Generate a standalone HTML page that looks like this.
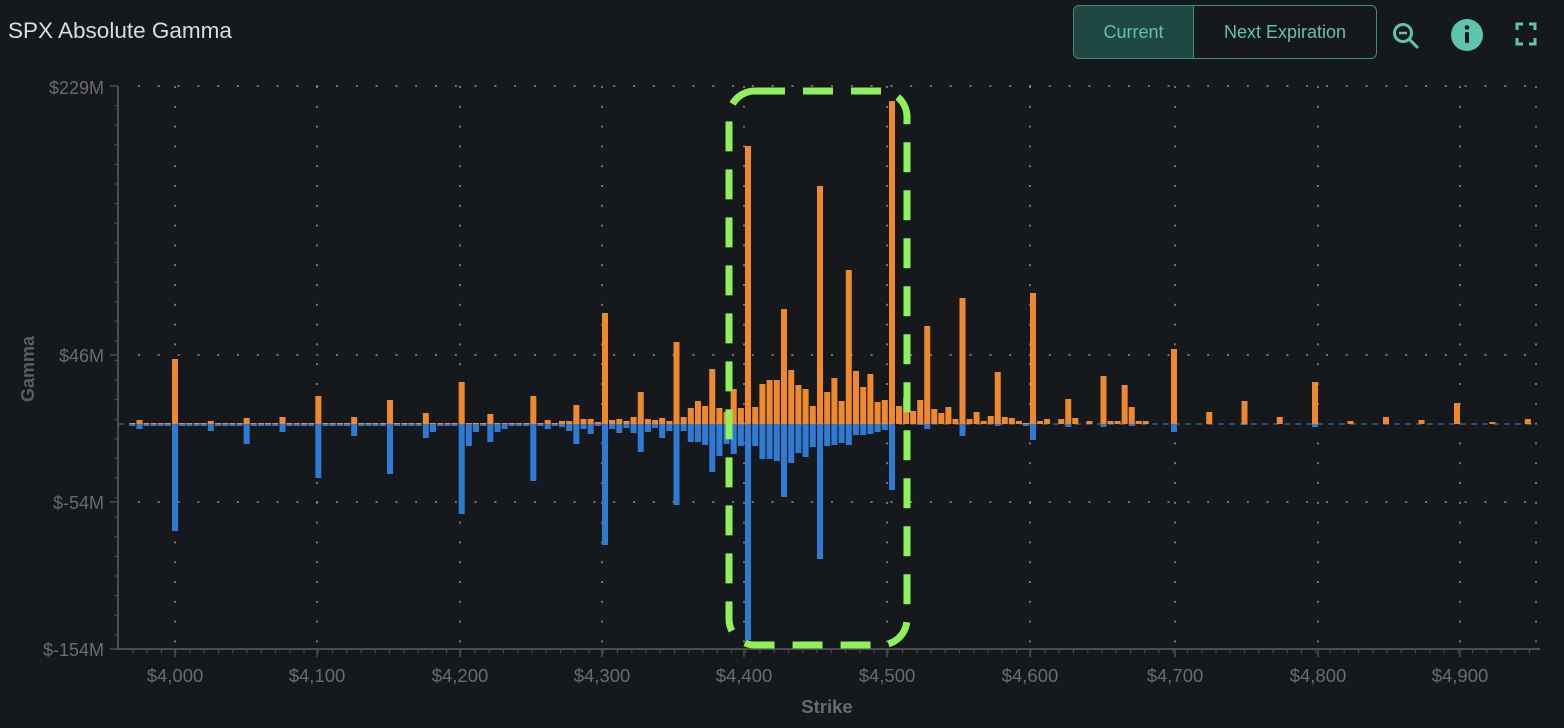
<!DOCTYPE html>
<html><head><meta charset="utf-8"><style>
html,body{margin:0;padding:0;background:#16191c;width:1564px;height:728px;overflow:hidden;font-family:"Liberation Sans",sans-serif}
.t{position:absolute;left:8px;top:18px;font-size:22.5px;color:#dcdcdc}
.bx{position:absolute;left:1073px;top:5px;width:302px;height:52px;border:1.5px solid #3f8f80;border-radius:6px;overflow:hidden;display:flex}
.bx div{height:52px;line-height:52px;color:#64c2ab;font-size:18px;text-align:center}
.c1{width:119px;background:#1f4743;border-right:1.5px solid #3f8f80}
.c2{flex:1}
</style></head><body>
<div class="t">SPX Absolute Gamma</div>
<div class="bx"><div class="c1">Current</div><div class="c2">Next Expiration</div></div>
<svg style="position:absolute;left:0;top:0" width="1564" height="728" id="s">
<g fill="none" stroke="#5ec4ad" stroke-width="3">
<circle cx="1403" cy="33" r="8.5"/><line x1="1409" y1="39" x2="1417" y2="47" stroke-linecap="round"/><line x1="1399" y1="33" x2="1407" y2="33" stroke-width="2.5"/>
<path d="M1517 30v-6h6M1529 24h6v6M1535 38v6h-6M1523 44h-6v-6" stroke-width="3"/>
</g>
<circle cx="1467" cy="35" r="16" fill="#5ec4ad"/>
<circle cx="1467" cy="27.5" r="2.3" fill="#16191c"/><rect x="1465" y="32" width="4" height="11" rx="1.5" fill="#16191c"/>
<g font-family="Liberation Sans,sans-serif" font-size="18" fill="#6b6b6b" text-anchor="end">
<text x="104" y="94">$229M</text><text x="104" y="362">$46M</text><text x="104" y="509">$-54M</text><text x="104" y="656">$-154M</text>
</g>
<text x="34" y="369" transform="rotate(-90 34 369)" font-size="18" font-weight="bold" fill="#5d5d5d" text-anchor="middle" font-family="Liberation Sans,sans-serif">Gamma</text>
<text x="827" y="713" font-size="18.5" font-weight="bold" fill="#6b6b6b" text-anchor="middle" font-family="Liberation Sans,sans-serif">Strike</text>
<g id="g"></g>
<rect x="729" y="91" width="178" height="554" rx="26" fill="none" stroke="#8ef05a" stroke-width="7" stroke-dasharray="30 18"/>
</svg>
<script>
var g=document.getElementById('g'),h='';
var P=[[3950,104],[4000,175],[4300,605],[4400,748],[4500,892],[4600,1033],[4700,1174],[4800,1315],[4900,1457],[4960,1542]];
function X(s){for(var i=0;i<P.length-1;i++){if(s<=P[i+1][0]){var a=P[i],b=P[i+1];return a[1]+(s-a[0])*(b[1]-a[1])/(b[0]-a[0]);}}return 1542;}
var GX=[175,317,460,602,744,887,1030,1175,1318,1460];
var vx=GX.concat([1536]);
vx.forEach(function(x){for(var y=86;y<649;y+=19.8)h+='<rect x="'+(x-0.7)+'" y="'+y+'" width="1.4" height="2" fill="#9a9a9a"/>';});
[86,355,502].forEach(function(y){for(var x=138;x<1536;x+=19.8)h+='<rect x="'+x+'" y="'+(y-0.7)+'" width="2" height="1.4" fill="#9a9a9a"/>';});
h+='<line x1="118" y1="86" x2="118" y2="649" stroke="#4d4d4d" stroke-width="2"/>';
h+='<line x1="118" y1="649" x2="1540" y2="649" stroke="#4d4d4d" stroke-width="2"/>';
for(var y=86;y<649;y+=19.6)h+='<line x1="114" y1="'+y+'" x2="118" y2="'+y+'" stroke="#4d4d4d"/>';
[86,355,502,649].forEach(function(y){h+='<line x1="110" y1="'+y+'" x2="118" y2="'+y+'" stroke="#4d4d4d" stroke-width="1.5"/>';});
for(var x=133;x<1540;x+=14.25)h+='<line x1="'+x+'" y1="649" x2="'+x+'" y2="653" stroke="#4d4d4d"/>';
GX.forEach(function(x,i){var s=4000+i*100;h+='<line x1="'+x+'" y1="649" x2="'+x+'" y2="657" stroke="#4d4d4d" stroke-width="1.5"/>';
h+='<text x="'+x+'" y="682" font-size="18.5" fill="#6b6b6b" text-anchor="middle" font-family="Liberation Sans,sans-serif">$'+String(s).replace(/(\d)(\d{3})$/,'$1,$2')+'</text>';});
h+='<line x1="118" y1="424" x2="1536" y2="424" stroke="#2d5c8e" stroke-width="1.5" stroke-dasharray="6 5"/>';
var d={3975:[420,429],4000:[359,531],4025:[421,431],4050:[418,444],4075:[417,432],4100:[396,478],4125:[417,436],4150:[400,474],4175:[413,438],4180:[423,432],
4200:[382,514],4205:[423,446],4210:[423,432],4215:[423,426],4220:[414,442],4225:[423,432],4230:[423,429],4250:[396,481],4260:[420,429],4270:[421,427],4275:[421,431],4280:[405,444],4285:[419,429],
4290:[419,434],4295:[422,426],4300:[313,545],4305:[420,429],4310:[419,433],4315:[421,428],4320:[417,433],4325:[392,452],4330:[419,432],4335:[420,428],4340:[418,438],4345:[421,431],4350:[342,505],4355:[417,431],4360:[408,442],4365:[401,442],4370:[406,445],4375:[369,472],4380:[408,456],4385:[412,444],4390:[389,454],4395:[408,446],
4400:[146,640],4405:[407,446],4410:[384,459],4415:[380,459],4420:[380,461],4425:[309,497],4430:[370,463],4435:[385,453],4440:[389,457],4445:[406,447],4450:[186,559],4455:[392,446],4460:[378,445],4465:[401,443],4470:[270,445],4475:[371,435],4480:[387,435],4485:[374,434],4490:[402,432],4495:[400,430],4500:[101,490],
4505:[406,424],4510:[398,424],4515:[411,424],4520:[400,425],4525:[326,429],4530:[409,424],4535:[413,424],4540:[407,424],4545:[419,424],4550:[298,436],4555:[419,424],4560:[412,424],4565:[421,424],4570:[416,424],4575:[372,426],4580:[417,424],4585:[418,424],4590:[421,424],4600:[293,440],4605:[421,424],4610:[419,424],4620:[419,424],4625:[399,427],4630:[418,424],4640:[421,424],4650:[376,427],4655:[421,424],4660:[421,424],4665:[385,424],4670:[407,426],4675:[421,424],4680:[421,424],
4700:[349,432],4725:[412,424],4750:[401,425],4775:[417,424],4800:[382,427],4825:[421,424],4850:[417,424],4875:[420,424],4900:[403,424],4925:[422,424],4950:[419,424]};
for(var s=3970;s<=4950;s+=5){var v=d[s];if(!v){if(s>4600)continue;v=[423,426];}
var x=X(s)-3;if(v[0]<424)h+='<rect x="'+x+'" y="'+v[0]+'" width="6" height="'+(424-v[0])+'" fill="#f0892e"/>';
if(v[1]>424)h+='<rect x="'+x+'" y="424" width="6" height="'+(v[1]-424)+'" fill="#2f7ad2"/>';}
g.innerHTML=h;
</script>
</body></html>
